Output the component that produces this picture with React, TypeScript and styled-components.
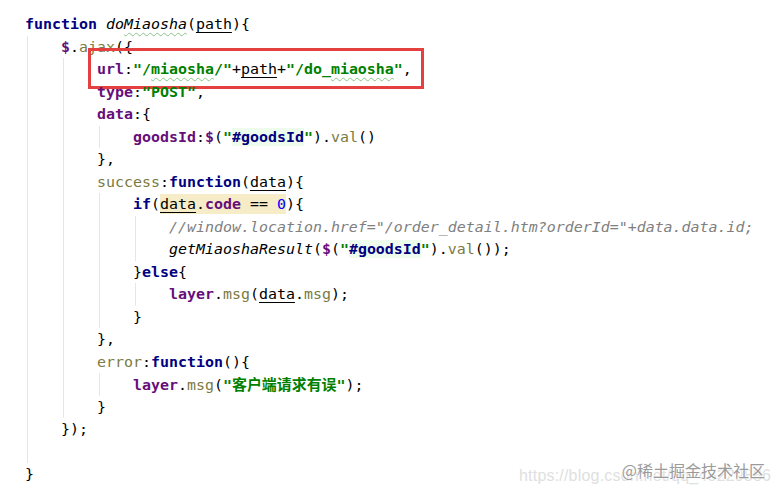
import React from "react";
import styled, { createGlobalStyle } from "styled-components";

const Global = createGlobalStyle`
  html, body { margin: 0; padding: 0; background: #ffffff; }
  body { width: 781px; height: 495px; overflow: hidden; }
`;

const Page = styled.div`
  position: relative;
  width: 781px;
  height: 495px;
  background: #ffffff;
  overflow: hidden;
`;

const Code = styled.div`
  display: flex;
  flex-direction: column;
  padding: 13px 0 0 25px;
  font-family: "DejaVu Sans Mono", "Liberation Mono", "Noto Sans CJK SC", monospace;
  font-size: 14.95px;
  line-height: 22.5px;
  color: #000000;
  white-space: pre;
`;

const Line = styled.div`
  display: flex;
  align-items: stretch;
  height: 22.5px;
`;

const Indent = styled.span`
  flex: none;
  width: 36px;
  background: linear-gradient(#e6e6e6, #e6e6e6) no-repeat 2px 0 / 1px 100%;
`;

const Content = styled.span`
  position: relative;
  display: block;
  white-space: pre;
`;

const Kw = styled.span`
  color: #000080;
  font-weight: bold;
`;

const FnName = styled.span`
  font-style: italic;
  color: #000000;
`;

const Param = styled.span`
  text-decoration: underline;
  text-underline-offset: 3px;
  text-decoration-thickness: 1px;
`;

const Prop = styled.span`
  color: #660e7a;
  font-weight: bold;
`;

const Str = styled.span`
  color: #008000;
  font-weight: bold;
`;

const Sel = styled.span`
  color: #000080;
  font-weight: bold;
  background: #edfced;
`;

const Method = styled.span`
  color: #7a7a43;
`;

const Num = styled.span`
  color: #0000ff;
`;

const Comment = styled.span`
  color: #808080;
  font-style: italic;
`;

const Typo = styled.span`
  text-decoration: underline wavy #8bc38b;
  text-decoration-thickness: 1px;
  text-underline-offset: 3px;
`;

const Hl = styled.span`
  display: inline-block;
  background: #f6ecc8;
  line-height: 20px;
  white-space: pre;
`;

const Cn = styled.span`
  font-family: "Noto Sans CJK SC", sans-serif;
  font-weight: bold;
  color: #008000;
`;

const Frame = styled.span`
  position: absolute;
  left: -9px;
  right: -12px;
  top: -10px;
  bottom: -8px;
  border: 3px solid #e4403f;
  pointer-events: none;
`;

const Watermark = styled.div`
  position: absolute;
  right: 10px;
  bottom: 8px;
  width: 260px;
  height: 30px;
`;

const Url = styled.span`
  position: absolute;
  left: 8px;
  top: 10px;
  font-family: "Liberation Sans", Arial, sans-serif;
  font-size: 16px;
  color: #e0e0e0;
  white-space: nowrap;
  letter-spacing: 0.2px;
`;

const Brand = styled.span`
  position: absolute;
  right: 6px;
  top: 1px;
  font-family: "Noto Sans CJK SC", sans-serif;
  font-size: 16px;
  color: #9b9b9b;
  white-space: nowrap;
  text-shadow: 0 0 2px #ffffff, 0 0 2px #ffffff;
`;

type L = { indent: number; children?: React.ReactNode };

const Row = ({ indent, children }: L) => (
  <Line>
    {Array.from({ length: indent }).map((_, i) => (
      <Indent key={i} />
    ))}
    <Content>{children}</Content>
  </Line>
);

export default function App() {
  return (
    <Page>
      <Global />
      <Code>
        <Row indent={0}>
          <Kw>function</Kw>{" "}<FnName>do<Typo>Miaosha</Typo></FnName>(<Param>path</Param>){"{"}
        </Row>
        <Row indent={1}>
          <Prop>$</Prop>.<Method>ajax</Method>({"{"}
        </Row>
        <Row indent={2}>
          <Prop>url</Prop>:<Str>"/<Typo>miaosha</Typo>/"</Str>+<Param>path</Param>+<Str>"/do_<Typo>miaosha</Typo>"</Str>,
          <Frame />
        </Row>
        <Row indent={2}>
          <Prop>type</Prop>:<Str>"POST"</Str>,
        </Row>
        <Row indent={2}>
          <Prop>data</Prop>:{"{"}
        </Row>
        <Row indent={3}>
          <Prop>goodsId</Prop>:<Prop>$</Prop>(<Str>"</Str><Sel>#goodsId</Sel><Str>"</Str>).<Method>val</Method>()
        </Row>
        <Row indent={2}>{"},"}</Row>
        <Row indent={2}>
          <Method>success</Method>:<Kw>function</Kw>(<Param>data</Param>){"{"}
        </Row>
        <Row indent={3}>
          <Kw>if</Kw>(<Hl><Param>data</Param>.<Prop>code</Prop>{" == "}<Num>0</Num></Hl>){"{"}
        </Row>
        <Row indent={4}>
          <Comment>//window.location.href="/order_detail.htm?orderId="+data.data.id;</Comment>
        </Row>
        <Row indent={4}>
          <FnName>getMiaoshaResult</FnName>(<Prop>$</Prop>(<Str>"</Str><Sel>#goodsId</Sel><Str>"</Str>).<Method>val</Method>());
        </Row>
        <Row indent={3}>
          {"}"}<Kw>else</Kw>{"{"}
        </Row>
        <Row indent={4}>
          <Prop>layer</Prop>.<Method>msg</Method>(<Param>data</Param>.<Method>msg</Method>);
        </Row>
        <Row indent={3}>{"}"}</Row>
        <Row indent={2}>{"},"}</Row>
        <Row indent={2}>
          <Method>error</Method>:<Kw>function</Kw>(){"{"}
        </Row>
        <Row indent={3}>
          <Prop>layer</Prop>.<Method>msg</Method>(<Str>"</Str><Cn>客户端请求有误</Cn><Str>"</Str>);
        </Row>
        <Row indent={2}>{"}"}</Row>
        <Row indent={1}>{"});"}</Row>
        <Row indent={1} />
        <Row indent={0}>{"}"}</Row>
      </Code>
      <Watermark>
        <Url>https://blog.csdn.net/qq_45229886</Url>
        <Brand>@稀土掘金技术社区</Brand>
      </Watermark>
    </Page>
  );
}
